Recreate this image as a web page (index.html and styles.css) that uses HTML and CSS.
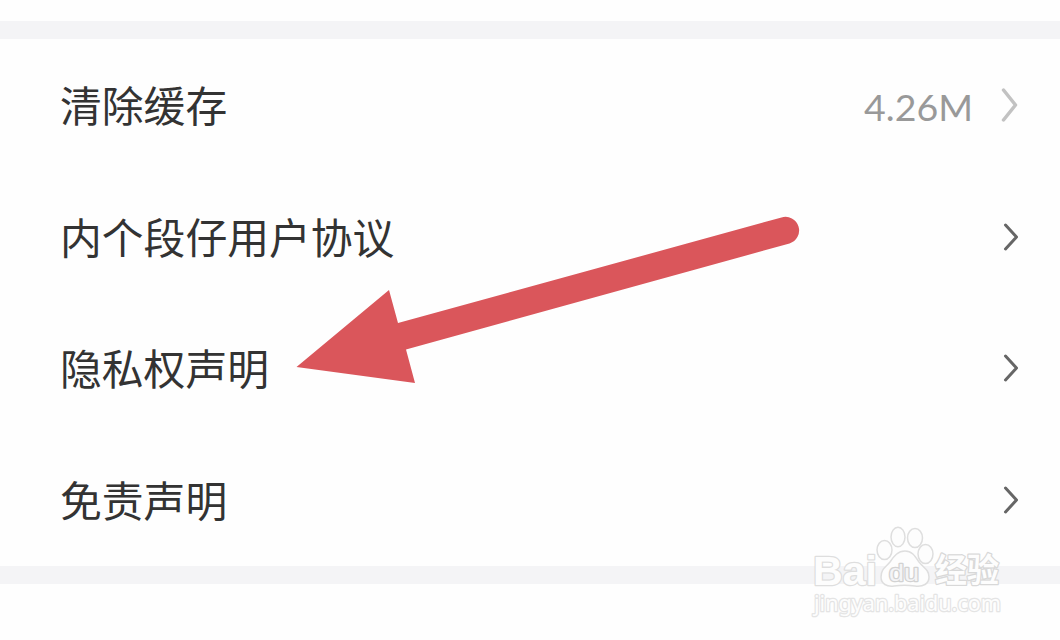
FILE: index.html
```html
<!DOCTYPE html>
<html lang="zh-CN">
<head>
  <meta charset="UTF-8">
  <meta name="viewport" content="width=device-width, initial-scale=1">
  <title>设置</title>
  <link rel="stylesheet" href="styles.css">
</head>
<body>
  <div class="divider"></div>

  <!-- Settings list -->
  <ul class="list">
    <li class="row">
      <span class="label">清除缓存</span>
      <span class="value">4.26M</span>
      <svg class="chevron light" viewBox="0 0 18 34"><path d="M2.500 2 14.500 17 2.500 32"/></svg>
    </li>
    <li class="row">
      <span class="label">内个段仔用户协议</span>
      <svg class="chevron" viewBox="0 0 18 34"><path d="M4.500 5 15.500 17 4.500 29"/></svg>
    </li>
    <li class="row">
      <span class="label">隐私权声明</span>
      <svg class="chevron" viewBox="0 0 18 34"><path d="M4.500 5 15.500 17 4.500 29"/></svg>
    </li>
    <li class="row">
      <span class="label">免责声明</span>
      <svg class="chevron" viewBox="0 0 18 34"><path d="M4.500 5 15.500 17 4.500 29"/></svg>
    </li>
  </ul>

  <div class="divider"></div>

  <!-- Arrow over the list -->
  <svg class="arrow" viewBox="0 0 504 168">
    <path d="M0.500 152 93 75 102 108 485.500 2.500A13.600 13.600 0 0 1 493.500 28.500L110 134.500 119 168Z"/>
  </svg>

  <!-- Watermark -->
  <svg class="watermark" viewBox="0 0 200 95">
    <text class="brand" x="13" y="64.500" textLength="64" lengthAdjust="spacingAndGlyphs">Bai</text>
    <ellipse cx="84.500" cy="30" rx="7.500" ry="9.500"/>
    <ellipse cx="98" cy="17" rx="7" ry="9.700"/>
    <ellipse cx="115" cy="18" rx="7.500" ry="9.500"/>
    <ellipse cx="125.500" cy="34" rx="7.500" ry="9.500"/>
    <path d="M105 31C98 31 94 36 90 42 86 47 81 49 81 57 81 64 87 67 94 66 101 65 108 65 115 66 123 67 129 64 129 57 129 50 124 48 119 42 115 36 112 31 105 31Z"/>
    <text class="du" x="89" y="61" textLength="30" lengthAdjust="spacingAndGlyphs">du</text>
    <text class="jingyan" x="135" y="62" textLength="64" lengthAdjust="spacingAndGlyphs">经验</text>
    <text class="site" x="14" y="91" textLength="187" lengthAdjust="spacingAndGlyphs">jingyan.baidu.com</text>
  </svg>
</body>
</html>
```
FILE: styles.css
```css
* {
  margin: 0;
  padding: 0;
  box-sizing: border-box;
}

body {
  position: relative;
  height: 640px;
  padding-top: 21px;
  overflow: hidden;
  background-color: #fefefe;
  color: #333;
  font-family: "Noto Sans CJK SC", sans-serif;
}

.divider {
  height: 18px;
  background-color: #f4f4f6;
}

/* Settings list */
.list {
  height: 527px;
  list-style: none;
}

.row {
  display: flex;
  align-items: center;
  height: 131.75px;
  padding: 0 41px 0 60px;
}

.label {
  flex: 1;
  padding-bottom: 2px;
  font-size: 41.800px;
  line-height: 60px;
}

.value {
  margin-right: 28px;
  padding-top: 4px;
  color: #999;
  font-family: Lato, sans-serif;
  font-size: 37.500px;
  letter-spacing: 0;
}

.chevron {
  width: 18px;
  height: 34px;
  fill: none;
  stroke: #666;
  stroke-width: 3;
  stroke-linecap: round;
  stroke-linejoin: round;
}

.chevron.light {
  stroke: #c2c2c2;
  stroke-width: 3.500;
}

/* Red arrow */
.arrow {
  position: absolute;
  top: 215px;
  left: 296px;
  width: 504px;
  height: 168px;
  fill: #da565b;
}

/* Watermark */
.watermark {
  position: absolute;
  top: 520px;
  left: 800px;
  width: 200px;
  height: 95px;
  overflow: visible;
  fill: #fdfdfd;
  stroke: #dedede;
  stroke-width: 1.500;
}

.watermark text {
  paint-order: stroke;
  stroke-width: 2.500;
  stroke-linejoin: round;
}

.brand {
  font: bold 41px "Liberation Sans", sans-serif;
}

.watermark .du {
  fill: #f4f4f6;
  stroke: #d2d2d2;
  font: 24px "Liberation Sans", sans-serif;
}

.watermark .jingyan {
  font: bold 33px "Noto Sans CJK SC", sans-serif;
  stroke: #d8d8d8;
}

.watermark .site {
  font: 22px "Noto Sans", sans-serif;
  stroke: #e4e4e4;
}
```
